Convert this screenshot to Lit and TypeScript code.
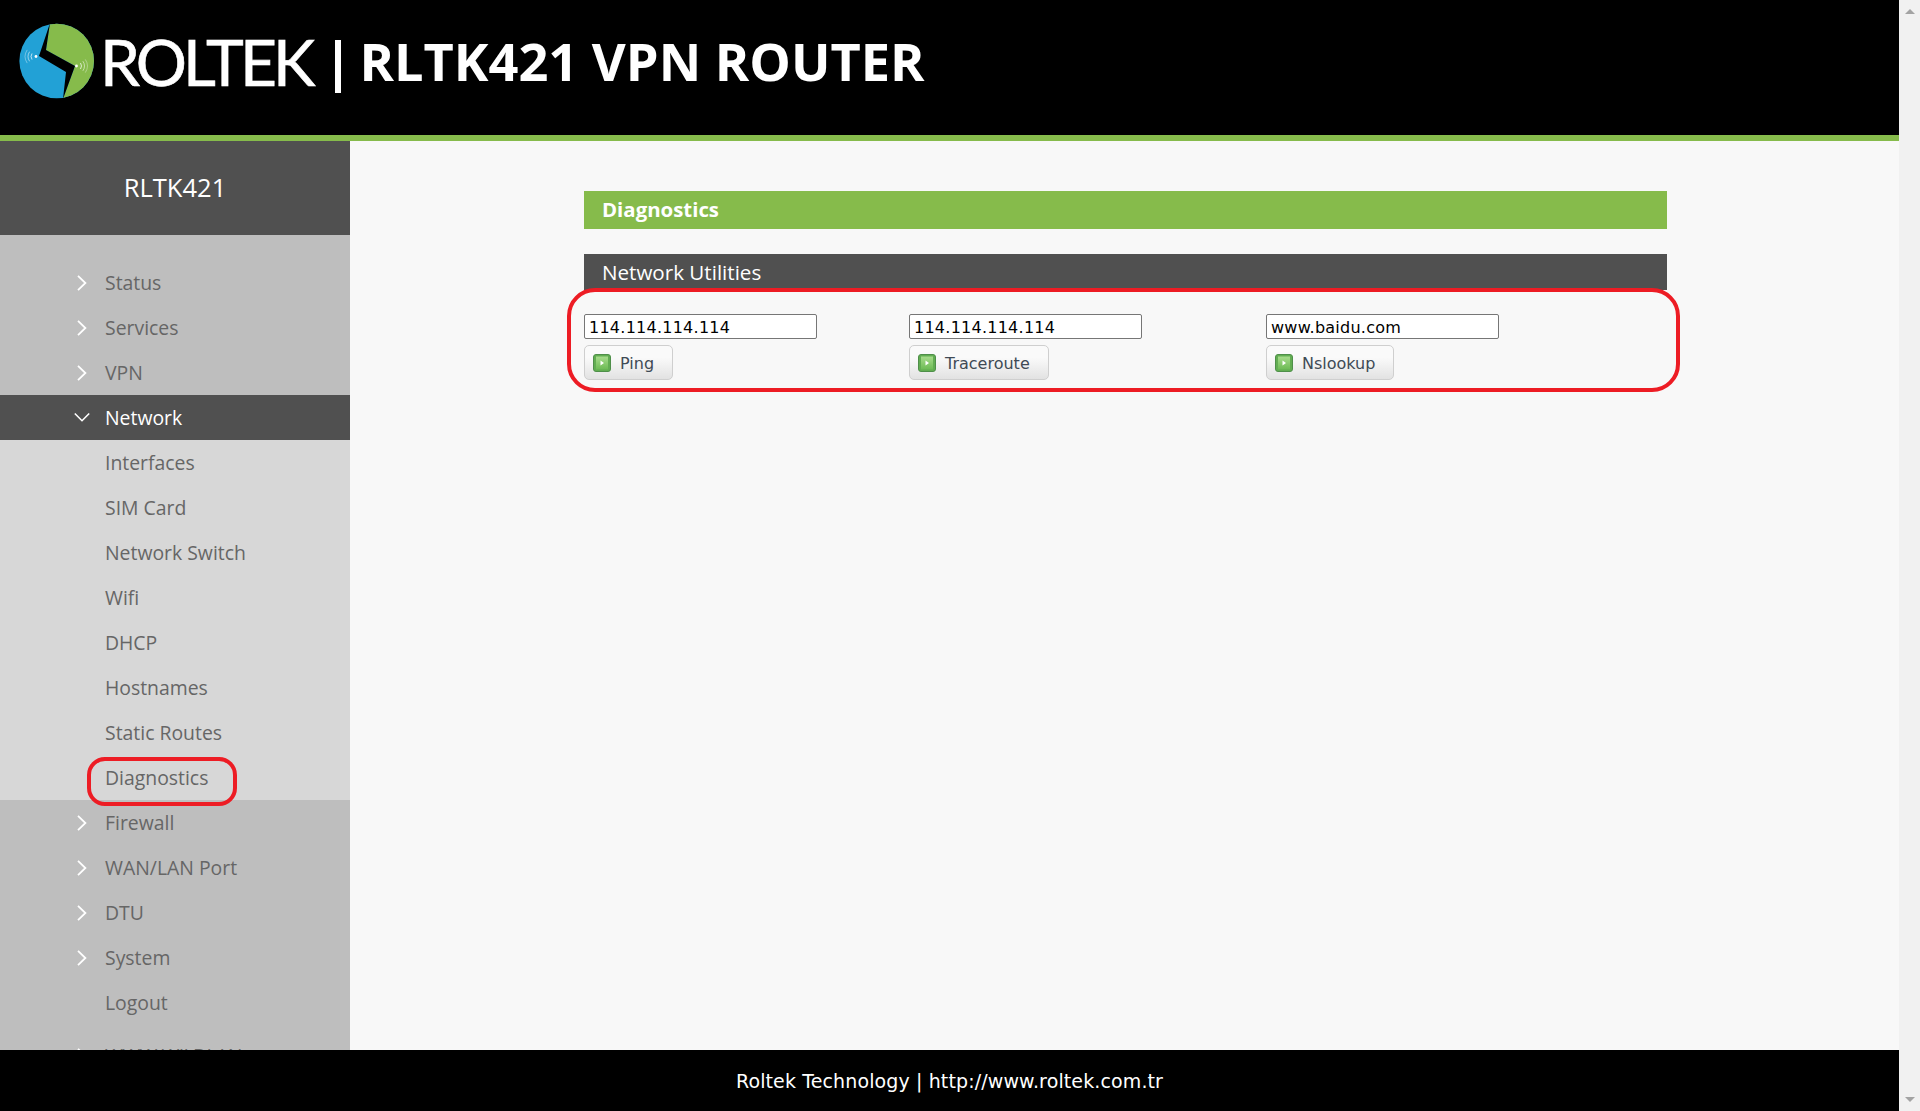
import { LitElement, html, css, svg } from "lit";
import { customElement } from "lit/decorators.js";

const chevron = html`<svg class="chev" width="12" height="16" viewBox="0 0 12 16"><path d="M2 0.8 L9.4 8 L2 15.2" fill="none" stroke="#fff" stroke-width="1.8"/></svg>`;
const chevronDown = html`<svg class="chev" width="16" height="12" viewBox="0 0 16 12"><path d="M0.8 1.5 L8 8.7 L15.2 1.5" fill="none" stroke="#fff" stroke-width="1.6"/></svg>`;

const waves = (x: number, y: number, dir: number) => svg`
  <circle cx=${x} cy=${y} r="1.4" fill="#fff"/>
  ${[5, 8, 11].map(
    (r, i) => svg`<path d="M${x + dir * r * 0.8} ${y - r * 0.6} Q${x + dir * r * 1.2} ${y} ${x + dir * r * 0.8} ${y + r * 0.6}" fill="none" stroke="#fff" stroke-opacity=${0.8 - i * 0.2} stroke-width="0.9"/>`
  )}
`;

const logo = html`<svg class="logo" width="90" height="90" viewBox="0 0 90 90">
  <defs><clipPath id="disc"><circle cx="46.7" cy="46" r="37.3"/></clipPath></defs>
  <g clip-path="url(#disc)">
    <rect width="90" height="90" fill="#22a1d6"/>
    <polygon points="40,8 36,35 65,51 53,84 90,90 90,0" fill="#86bb4b"/>
    <polygon points="40,8 36,35 65,51 53,84 56,57 29,41" fill="#000"/>
  </g>
  ${waves(26, 41.5, -1)}
  ${waves(66.5, 51, 1)}
</svg>`;

const playIcon = html`<svg class="play" width="18" height="18" viewBox="0 0 18 18">
  <defs>
    <linearGradient id="playFill" x1="0" y1="0" x2="0" y2="1">
      <stop offset="0" stop-color="#a8dc8c"/>
      <stop offset="1" stop-color="#6dbb55"/>
    </linearGradient>
  </defs>
  <rect x="0.5" y="0.5" width="17" height="17" rx="2.5" fill="#62ad52" stroke="#4f8f4a"/>
  <rect x="3" y="2.5" width="12" height="13" fill="url(#playFill)"/>
  <polygon points="7.5,6.5 11,9 7.5,11.5" fill="#fff"/>
</svg>`;

const topItems = ["Status", "Services", "VPN"];
const subItems = ["Interfaces", "SIM Card", "Network Switch", "Wifi", "DHCP", "Hostnames", "Static Routes", "Diagnostics"];
const lowerItems = ["Firewall", "WAN/LAN Port", "DTU", "System"];
const tools = [
  { value: "114.114.114.114", label: "Ping" },
  { value: "114.114.114.114", label: "Traceroute" },
  { value: "www.baidu.com", label: "Nslookup" },
];

@customElement("app-root")
export class AppRoot extends LitElement {
  static styles = css`
    :host {
      display: flex;
      height: 1111px;
      overflow: hidden;
      background: #f8f8f8;
      font-family: "Open Sans", sans-serif;
    }
    .page {
      flex: 1;
      min-width: 0;
      display: flex;
      flex-direction: column;
    }
    .scrollbar {
      width: 21px;
      background: #f1f1f1;
      display: flex;
      flex-direction: column;
      justify-content: space-between;
      align-items: center;
      padding: 9px 0;
      box-sizing: border-box;
    }
    .arrow-up {
      width: 0;
      border: 5px solid transparent;
      border-top: 0;
      border-bottom-color: #a3a3a3;
    }
    .arrow-down {
      width: 0;
      border: 5px solid transparent;
      border-bottom: 0;
      border-top-color: #a3a3a3;
    }
    header {
      height: 135px;
      flex: none;
      background: #000;
      border-bottom: 6px solid #86bb4b;
      display: flex;
      align-items: flex-start;
      padding-left: 10px;
      color: #fff;
      white-space: nowrap;
    }
    .logo {
      margin-top: 15px;
      flex: none;
    }
    .brand {
      font-family: Lato, sans-serif;
      font-weight: 400;
      font-size: 64px;
      line-height: 64px;
      letter-spacing: -3.9px;
      margin: 30px 0 0 0;
      -webkit-text-stroke: 0.6px #fff;
    }
    .pipe {
      width: 6px;
      height: 53px;
      background: #fff;
      margin: 40px 18px 0 24px;
    }
    h1 {
      margin: 29px 0 0;
      font-size: 52.3px;
      line-height: 64px;
      font-weight: 700;
    }
    .body {
      flex: 1;
      display: flex;
      min-height: 0;
    }
    aside {
      width: 350px;
      flex: none;
      background: #bebebe;
      overflow: hidden;
    }
    .device {
      height: 94px;
      padding-bottom: 3px;
      box-sizing: border-box;
      background: #505050;
      color: #fff;
      font-size: 25.5px;
      display: flex;
      align-items: center;
      justify-content: center;
      margin-bottom: 25px;
    }
    .item {
      height: 45px;
      display: flex;
      align-items: center;
      padding-left: 105px;
      position: relative;
      color: #666;
      font-size: 19.4px;
      white-space: nowrap;
    }
    .chev {
      position: absolute;
      left: 76px;
      top: 15px;
    }
    .item.open {
      background: #505050;
      color: #fff;
    }
    .item.open .chev {
      left: 74px;
      top: 17px;
    }
    .sub {
      background: #d7d7d7;
    }
    .clipped {
      margin-top: 8px;
      letter-spacing: -0.6px;
    }
    .mark {
      position: absolute;
      border: 4px solid #ed1c24;
      box-sizing: border-box;
      pointer-events: none;
    }
    .mark-side {
      left: 87px;
      top: 2px;
      width: 150px;
      height: 49px;
      border-radius: 18px;
    }
    main {
      flex: 1;
      padding: 50px 232px 0 234px;
      min-width: 0;
    }
    .title {
      height: 38px;
      line-height: 37px;
      background: #86bb4b;
      color: #fff;
      font-size: 20.4px;
      font-weight: 700;
      padding-left: 18px;
    }
    .section {
      margin-top: 25px;
      height: 36px;
      line-height: 36px;
      background: #505050;
      color: #fff;
      font-size: 20.6px;
      padding-left: 18px;
    }
    .tools {
      position: relative;
      display: flex;
      padding-top: 24px;
    }
    .mark-tools {
      left: -17px;
      right: -13px;
      top: -2px;
      height: 104px;
      border-radius: 28px;
    }
    .tool {
      display: flex;
      flex-direction: column;
      align-items: flex-start;
      gap: 6px;
    }
    .tool:nth-child(2) {
      margin-left: 92px;
    }
    .tool:nth-child(3) {
      margin-left: 124px;
    }
    input {
      width: 233px;
      height: 25px;
      box-sizing: border-box;
      margin: 0;
      padding: 2px 4px 0;
      border: 1px solid #767676;
      border-radius: 2px;
      background: #fff;
      color: #000;
      font-family: "DejaVu Sans", sans-serif;
      font-size: 16px;
      letter-spacing: 0.25px;
      outline: none;
    }
    button {
      height: 35px;
      box-sizing: border-box;
      display: flex;
      align-items: center;
      gap: 9px;
      margin: 0;
      padding: 2px 18px 0 8px;
      border: 1px solid #cfcfcf;
      border-radius: 5px;
      background: linear-gradient(#fafafa 35%, #e2e2e2);
      color: #404a55;
      font-family: "DejaVu Sans", sans-serif;
      font-size: 16px;
    }
    .play {
      flex: none;
      margin-top: -2px;
    }
    footer {
      height: 61px;
      flex: none;
      background: #000;
      color: #fff;
      display: flex;
      align-items: center;
      justify-content: center;
      font-family: "DejaVu Sans", sans-serif;
      font-size: 19px;
      letter-spacing: 0.12px;
    }
  `;

  render() {
    return html`
      <div class="page">
        <header>
          ${logo}
          <div class="brand">ROLTEK</div>
          <div class="pipe"></div>
          <h1>RLTK421 VPN ROUTER</h1>
        </header>
        <div class="body">
          <aside>
            <div class="device">RLTK421</div>
            ${topItems.map((t) => html`<div class="item">${chevron}${t}</div>`)}
            <div class="item open">${chevronDown}Network</div>
            <div class="sub">
              ${subItems.map(
                (t) => html`<div class="item">${t}${t === "Diagnostics" ? html`<div class="mark mark-side"></div>` : ""}</div>`
              )}
            </div>
            ${lowerItems.map((t) => html`<div class="item">${chevron}${t}</div>`)}
            <div class="item">Logout</div>
            <div class="item clipped">${chevron}WWW.WILDLAN</div>
          </aside>
          <main>
            <div class="title">Diagnostics</div>
            <div class="section">Network Utilities</div>
            <div class="tools">
              ${tools.map(
                (t) => html`<div class="tool">
                  <input type="text" .value=${t.value} />
                  <button>${playIcon}${t.label}</button>
                </div>`
              )}
              <div class="mark mark-tools"></div>
            </div>
          </main>
        </div>
        <footer>Roltek Technology | http://www.roltek.com.tr</footer>
      </div>
      <div class="scrollbar">
        <div class="arrow-up"></div>
        <div class="arrow-down"></div>
      </div>
    `;
  }
}
